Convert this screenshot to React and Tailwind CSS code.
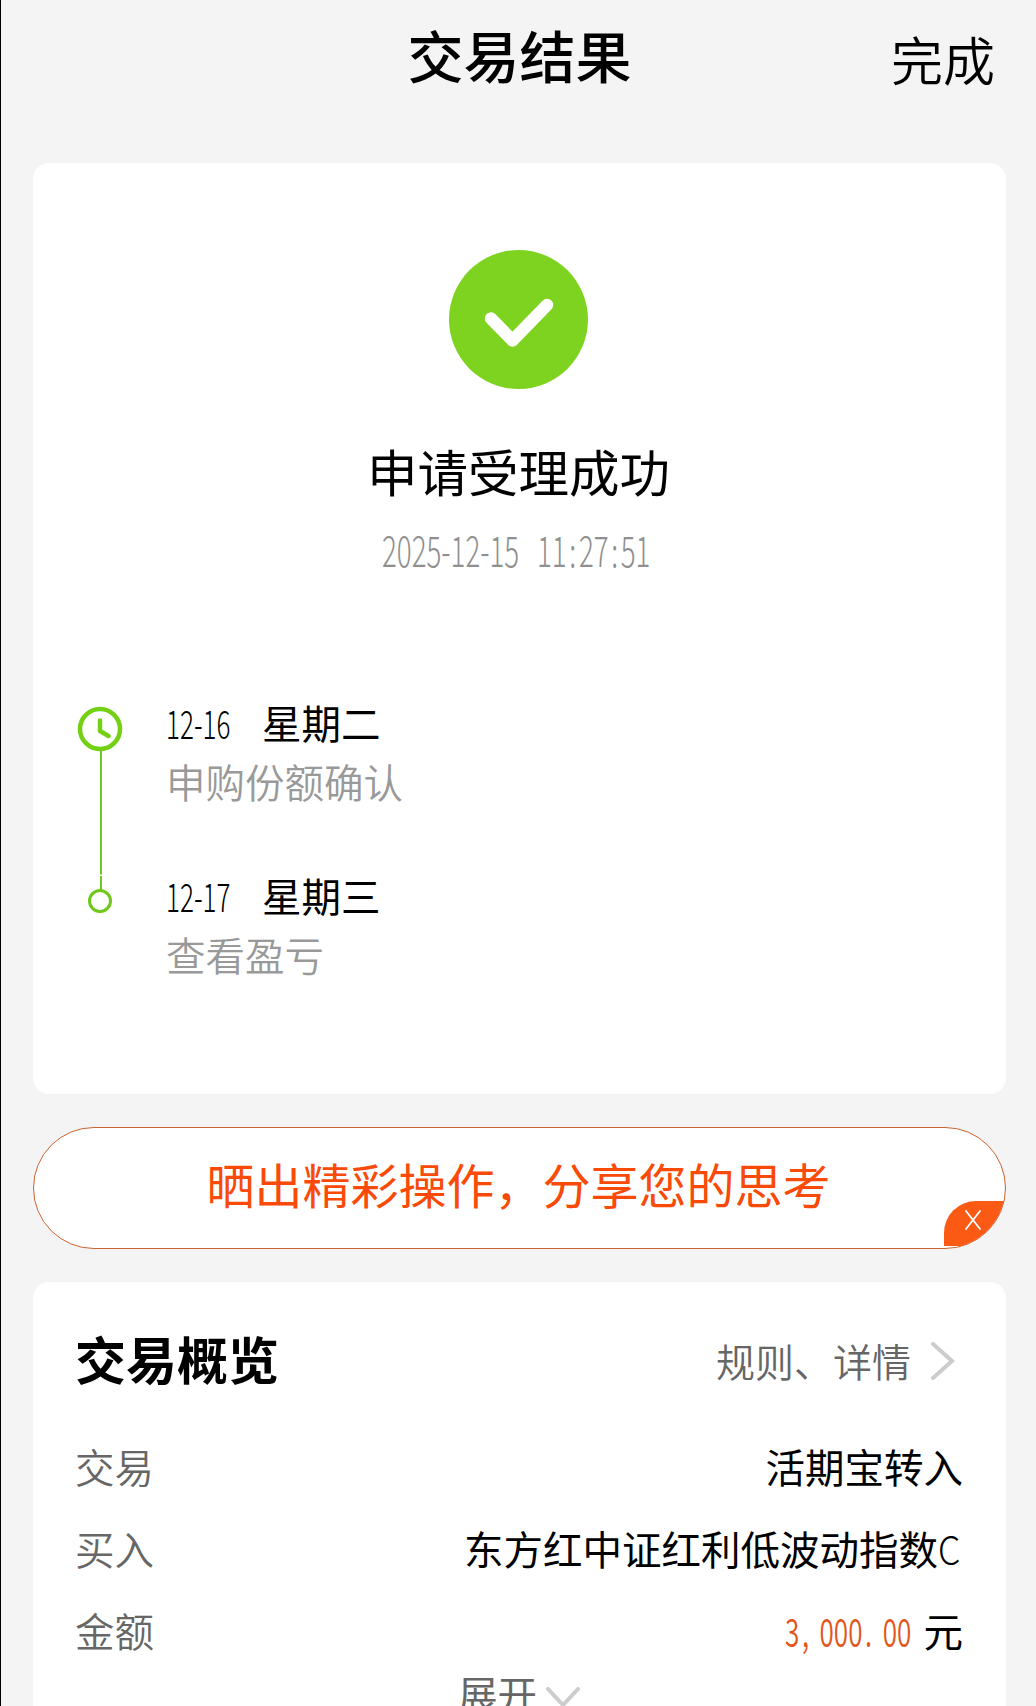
const timeline = [
  { date: "12-16", weekday: "星期二", label: "申购份额确认" },
  { date: "12-17", weekday: "星期三", label: "查看盈亏" },
];

const overview = [
  { label: "交易", value: "活期宝转入" },
  { label: "买入", value: "东方红中证红利低波动指数", suffix: "C" },
];

// Condensed figures: the box has the final width, the inner text is squeezed into it
const Narrow = ({ children, className = "" }) => (
  <span className={`inline-block whitespace-nowrap ${className}`}>
    <span className="inline-block origin-left scale-x-[0.66]">{children}</span>
  </span>
);

const Header = () => (
  <header className="grid h-[163px] grid-cols-[1fr_auto_1fr] items-start pr-[41px]">
    <span />
    <h1 className="mt-[14px] ml-[43px] text-[56px] leading-[80px] font-medium">
      交易结果
    </h1>
    <button className="mt-[19px] justify-self-end text-[52px] leading-[80px] font-[350]">
      完成
    </button>
  </header>
);

const SuccessIcon = () => (
  <svg width="139" height="139" viewBox="0 0 139 139" fill="none">
    <circle cx="69.5" cy="69.5" r="69.5" fill="#7ed321" />
    <path
      d="M42 68.5 63.5 90.5 98 55"
      stroke="white"
      strokeWidth="12.5"
      strokeLinecap="round"
      strokeLinejoin="round"
    />
  </svg>
);

const TimelineTrack = () => (
  <svg width="46" height="210" viewBox="0 0 46 210" fill="none" className="shrink-0">
    <circle cx="23" cy="23" r="20" stroke="#73d013" strokeWidth="4.5" />
    <path
      d="M23 14.5V25L31.5 30"
      stroke="#73d013"
      strokeWidth="4.5"
      strokeLinecap="round"
      strokeLinejoin="round"
    />
    <path d="M24 45V168.5M24 170V184" stroke="#6fc81a" strokeWidth="2" />
    <circle cx="23" cy="195" r="10.5" stroke="#6fc81a" strokeWidth="3" />
  </svg>
);

const ResultCard = () => (
  <section className="flex h-[931px] flex-col items-center rounded-[16px] bg-white pt-[87px] pr-[2px]">
    <SuccessIcon />
    <h2 className="mt-[51px] text-[50.5px] leading-[60px]">申请受理成功</h2>
    <p className="mt-[19px] flex h-[60px] text-[42px] leading-[60px] font-light text-[#8f8f8f]">
      <Narrow className="w-[155px]">2025-12-15</Narrow>
      <Narrow className="w-[119px]">
        11<span className="px-[4px]">:</span>27<span className="px-[4px]">:</span>51
      </Narrow>
    </p>
    <div className="mt-[127px] flex w-full gap-[43px] pl-[44px]">
      <TimelineTrack />
      <ul className="text-[39.5px] leading-[56px]">
        {timeline.map((item) => (
          <li key={item.date} className="-mt-[12px] mb-[73px] h-[112px]">
            <div className="flex">
              <Narrow className="w-[96px] font-light">{item.date}</Narrow>
              <span>{item.weekday}</span>
            </div>
            <div className="mt-[3px] font-[350] text-[#999]">{item.label}</div>
          </li>
        ))}
      </ul>
    </div>
  </section>
);

const ShareBanner = () => (
  <section className="relative mt-[33px] flex h-[122px] items-center justify-center overflow-hidden rounded-full border border-[#cb6231] bg-white">
    <p className="-mt-[10px] pr-[2px] text-[48px] leading-[60px] text-[#f94a08]">
      晒出精彩操作，分享您的思考
    </p>
    <button className="absolute right-0 bottom-[2px] h-[45px] w-[61px] rounded-tl-[32px] bg-[#fb5a14]">
      <svg width="16" height="20" viewBox="0 0 16 20" className="absolute top-[9px] left-[21px]">
        <path
          d="M1 1 15 19M15 1 1 19"
          stroke="white"
          strokeWidth="1.8"
          strokeLinecap="round"
        />
      </svg>
    </button>
  </section>
);

const OverviewCard = () => (
  <section className="mt-[33px] h-[440px] rounded-t-[16px] bg-white pr-[43px] pl-[42px] text-[39.5px]">
    <div className="flex h-[143px] items-start justify-between">
      <h2 className="mt-[41px] text-[51px] leading-[70px] font-bold">交易概览</h2>
      <div className="mt-[48px] flex items-center pr-[8px]">
        <span className="text-[39px] leading-[60px] font-[350] text-[#666]">
          规则、详情
        </span>
        <svg width="24" height="38" viewBox="0 0 24 38" fill="none" className="mt-[2px] ml-[20px]">
          <path d="M2 2 21 19 2 36" stroke="#ccc" strokeWidth="4" strokeLinecap="round" />
        </svg>
      </div>
    </div>
    {overview.map((row) => (
      <div key={row.label} className="flex h-[82px] items-center justify-between">
        <span className="font-[350] text-[#666]">{row.label}</span>
        <span className="flex">
          {row.value}
          {row.suffix && (
            <span className="w-[25px] font-light">
              <span className="inline-block origin-left scale-x-[0.9]">{row.suffix}</span>
            </span>
          )}
        </span>
      </div>
    ))}
    <div className="flex h-[82px] items-center justify-between">
      <span className="font-[350] text-[#666]">金额</span>
      <span className="flex">
        <Narrow className="w-[139px] font-[350] text-[#e2551a]">
          3<span className="pr-[16px] pl-[4px]">,</span>000
          <span className="pr-[16px] pl-[4px]">.</span>00
        </Narrow>
        元
      </span>
    </div>
    <div className="flex h-[60px] items-start justify-center gap-[9px] pt-[2px] text-[#666]">
      <span className="leading-[40px]">展开</span>
      <svg width="34" height="22" viewBox="0 0 34 22" fill="none" className="mt-[14px]">
        <path d="M2 2 17 18 32 2" stroke="#ccc" strokeWidth="4" strokeLinecap="round" />
      </svg>
    </div>
  </section>
);

const App = () => {
  return (
    <main className="h-[1706px] w-[1036px] overflow-hidden border-l border-black bg-[#f4f4f4] font-['Noto_Sans_CJK_SC',sans-serif] text-black">
      <Header />
      <div className="pr-[30px] pl-[32px]">
        <ResultCard />
        <ShareBanner />
        <OverviewCard />
      </div>
    </main>
  );
};

export default App;
